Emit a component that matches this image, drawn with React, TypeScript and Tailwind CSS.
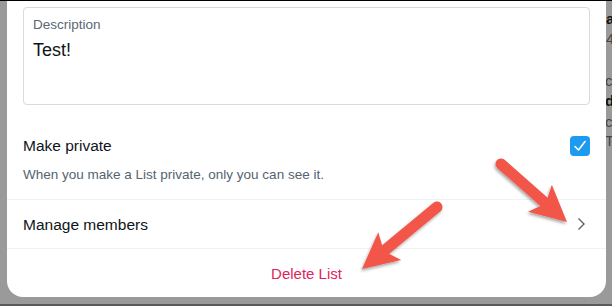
import React from "react";

function Arrow({ x1, y1, x2, y2 }: { x1: number; y1: number; x2: number; y2: number }) {
  const dx = x2 - x1;
  const dy = y2 - y1;
  const len = Math.sqrt(dx * dx + dy * dy);
  const ux = dx / len;
  const uy = dy / len;
  const px = -uy;
  const py = ux;
  const headLen = 36;
  const headW = 18;
  const bx = x2 - ux * headLen;
  const by = y2 - uy * headLen;
  const sx = x2 - ux * (headLen - 8);
  const sy = y2 - uy * (headLen - 8);
  const pts = `${x2},${y2} ${bx + px * headW},${by + py * headW} ${bx + ux * 6 + px * 4},${by + uy * 6 + py * 4} ${bx + ux * 6 - px * 4},${by + uy * 6 - py * 4} ${bx - px * headW},${by - py * headW}`;
  return (
    <g filter="url(#sh)">
      <line x1={x1} y1={y1} x2={sx} y2={sy} stroke="#f2564a" strokeWidth={11} strokeLinecap="round" />
      <polygon points={pts} fill="#f2564a" />
    </g>
  );
}

export default function App() {
  return (
    <div
      className="relative w-[612px] h-[306px] overflow-hidden bg-[#9a9a9a] border-t border-black border-b-2 border-b-[#5a5a5a]"
      style={{ fontFamily: "'Liberation Sans', Arial, sans-serif" }}
    >
      <div className="absolute right-0 top-0 w-[6px] h-full overflow-hidden text-[#111] text-[15px] font-bold leading-none">
        <div className="absolute left-[0px] top-[10px]">a</div>
        <div className="absolute left-[0px] top-[30px] font-normal text-[#444]">4</div>
        <div className="absolute left-[-1px] top-[72px] font-normal text-[#444]">c</div>
        <div className="absolute left-[-1px] top-[92px]">d</div>
        <div className="absolute left-[-1px] top-[113px] font-normal text-[#444]">c</div>
        <div className="absolute left-[-1px] top-[132px] font-normal text-[#444]">T</div>
      </div>
      <div className="ml-[7px] w-[599px] h-[296px] bg-white rounded-b-[16px] flex flex-col">
        <div className="px-4 pt-[6px]">
          <div className="h-[98px] border border-[#d6dbdf] rounded-[4px] px-[9px] pt-[9px]">
            <div className="text-[13.5px] leading-4 text-[#5b6773]">Description</div>
            <div className="text-[18px] leading-[22px] text-[#0f1419] mt-[6px]">Test!</div>
          </div>
        </div>
        <div className="px-4 pt-[31px] flex items-center justify-between">
          <div className="text-[15.5px] leading-5 text-[#0f1419]">Make private</div>
          <div className="w-[20px] h-[20px] rounded-[4px] bg-[#1d9bf0] flex items-center justify-center">
            <svg width="14" height="14" viewBox="0 0 14 14">
              <path d="M2 7.5 L5.5 11 L12 2.5" stroke="white" strokeWidth="1.6" fill="none" strokeLinecap="round" strokeLinejoin="round" />
            </svg>
          </div>
        </div>
        <div className="px-4 pt-[11px] text-[13.5px] leading-4 text-[#536471]">
          When you make a List private, only you can see it.
        </div>
        <div className="mt-[16px] border-t border-[#eff3f4] h-[49px] px-4 flex items-center justify-between">
          <div className="text-[15.5px] leading-5 text-[#0f1419] pt-[1px]">Manage members</div>
          <svg width="14" height="14" viewBox="0 0 14 14" className="mr-[2px]">
            <path d="M4.5 1.5 L10 7 L4.5 12.5" stroke="#536471" strokeWidth="1.4" fill="none" />
          </svg>
        </div>
        <div className="border-t border-[#eff3f4] flex-1 flex items-center justify-center pt-[2px]">
          <div className="text-[15px] leading-5 text-[#e0245e]">Delete List</div>
        </div>
      </div>
      <svg className="absolute left-0 top-0" width="612" height="306" viewBox="0 0 612 306">
        <defs>
          <filter id="sh" x="-20%" y="-20%" width="140%" height="140%">
            <feDropShadow dx="-1" dy="2" stdDeviation="1.5" floodColor="#000" floodOpacity="0.35" />
          </filter>
        </defs>
        <Arrow x1={501} y1={163} x2={567} y2={221} />
        <Arrow x1={437} y1={206} x2={362} y2={268} />
      </svg>
    </div>
  );
}
